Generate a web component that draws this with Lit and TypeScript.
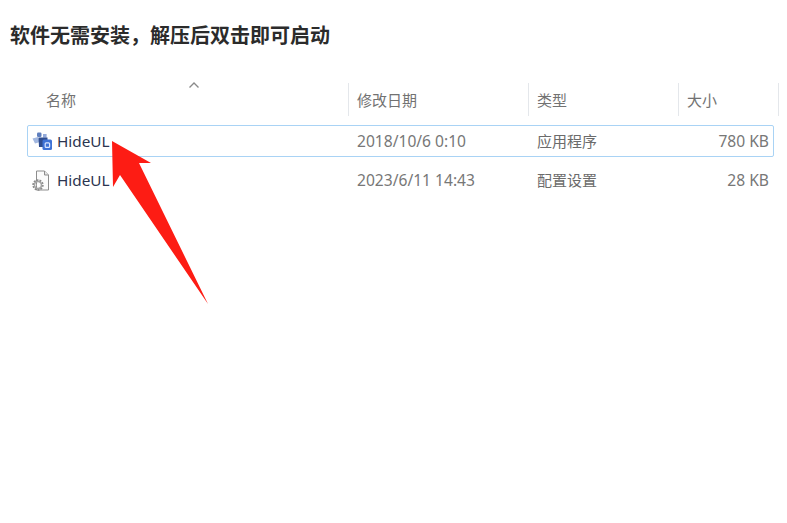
import { LitElement, html, css, svg } from "lit";
import { customElement } from "lit/decorators.js";

const exeIcon = svg`<svg class="ico" viewBox="0 0 20 18" width="20" height="18">
  <path d="M0.5 6.5 L6 5 L8 10 L3 11.5 Z" fill="#a3b8e0"/>
  <rect x="5" y="0.5" width="4.5" height="4.5" rx="1.2" fill="#5f7fbe"/>
  <rect x="11" y="2" width="3.6" height="3.6" fill="#93aadb"/>
  <path d="M6.5 5.5 h9 v3.5 h-3 v6 h-5.5 Z" fill="#2f4d8f"/>
  <rect x="10.5" y="7.5" width="9.5" height="10.5" rx="1.5" fill="#3f73d6"/>
  <rect x="13.2" y="10.8" width="4.4" height="4.6" rx="1" fill="none" stroke="#dbe7ff" stroke-width="1.2"/>
</svg>`;

const iniIcon = svg`<svg class="ico" viewBox="0 0 18 21" width="18" height="21">
  <path d="M4.5 1 H12.5 L16.5 5 V20 H4.5 Z" fill="#fbfbfb" stroke="#8d8d8d" stroke-width="1"/>
  <path d="M12.5 1 V5 H16.5" fill="#e6e6e6" stroke="#8d8d8d" stroke-width="1"/>
  <circle cx="6" cy="15" r="4.4" fill="none" stroke="#8a8a8a" stroke-width="2.6" stroke-dasharray="1.7 1"/>
  <circle cx="6" cy="15" r="3.5" fill="none" stroke="#a5a5a5" stroke-width="1.6"/>
  <circle cx="6" cy="15" r="1.3" fill="#fff"/>
</svg>`;

@customElement("app-root")
export class AppRoot extends LitElement {
  static styles = css`
    :host {
      display: block;
      width: 787px;
      height: 523px;
      background: #fff;
      overflow: hidden;
      position: relative;
      font-family: "Noto Sans CJK SC", "Liberation Sans", sans-serif;
    }
    .title {
      margin: 0;
      padding: 22px 0 0 10px;
      height: 83px;
      box-sizing: border-box;
      font-size: 20px;
      line-height: 26px;
      font-weight: 700;
      color: #2b2b2b;
    }
    .table {
      margin-left: 27px;
      width: 752px;
      font-size: 15px;
      color: #6b6b6b;
    }
    .head,
    .row {
      display: grid;
      align-items: center;
    }
    .head {
      height: 33px;
      grid-template-columns: 322px 180px 150px 1fr;
    }
    .head > div {
      height: 33px;
      line-height: 33px;
      padding-left: 8px;
      box-sizing: border-box;
      border-right: 1px solid #e4e7eb;
      position: relative;
      color: #727272;
    }
    .head > div:first-child {
      padding-left: 19px;
    }
    .sort {
      position: absolute;
      left: 161px;
      top: -2px;
      display: block;
    }
    .rows {
      margin-top: 9px;
      width: 747px;
      display: flex;
      flex-direction: column;
    }
    .row {
      height: 32px;
      box-sizing: border-box;
      border: 1px solid transparent;
      grid-template-columns: 321px 180px 150px 1fr;
    }
    .row.sel {
      border-color: #a9d3f5;
      border-radius: 2px;
      margin-bottom: 7px;
    }
    .row > div {
      padding-left: 8px;
      white-space: nowrap;
    }
    .name {
      display: flex;
      align-items: center;
      gap: 5px;
      padding-left: 4px !important;
      color: #2c3550;
      font-family: "Noto Sans", "Open Sans", sans-serif;
      font-size: 15.3px;
    }
    .name.ini {
      gap: 7px;
    }
    .date {
      font-family: "Noto Sans", "Open Sans", sans-serif;
      font-size: 15.6px;
      color: #777;
    }
    .type {
      margin-top: -2px;
    }
    .size {
      font-family: "Noto Sans", "Open Sans", sans-serif;
      font-size: 15.6px;
      color: #777;
      text-align: right;
      padding: 0 4px 0 0 !important;
    }
    .ico {
      flex: none;
      display: block;
    }
    .arrow {
      position: absolute;
      left: 0;
      top: 0;
      pointer-events: none;
    }
  `;

  render() {
    return html`
      <h1 class="title">软件无需安装，解压后双击即可启动</h1>
      <div class="table">
        <div class="head">
          <div>
            名称
            <svg class="sort" width="12" height="8" viewBox="0 0 12 8">
              <path d="M1.5 6.5 L6 2 L10.5 6.5" fill="none" stroke="#8a8a8a" stroke-width="1.4" />
            </svg>
          </div>
          <div>修改日期</div>
          <div>类型</div>
          <div>大小</div>
        </div>
        <div class="rows">
          <div class="row sel">
            <div class="name">${exeIcon}<span>HideUL</span></div>
            <div class="date">2018/10/6 0:10</div>
            <div class="type">应用程序</div>
            <div class="size">780 KB</div>
          </div>
          <div class="row">
            <div class="name ini">${iniIcon}<span>HideUL</span></div>
            <div class="date">2023/6/11 14:43</div>
            <div class="type">配置设置</div>
            <div class="size">28 KB</div>
          </div>
        </div>
      </div>
      <svg class="arrow" width="787" height="523" viewBox="0 0 787 523">
        <path d="M112 141 L151 163 L139 163 L208 304 L120 175 L113 187 Z" fill="#fd1c14" />
      </svg>
    `;
  }
}
